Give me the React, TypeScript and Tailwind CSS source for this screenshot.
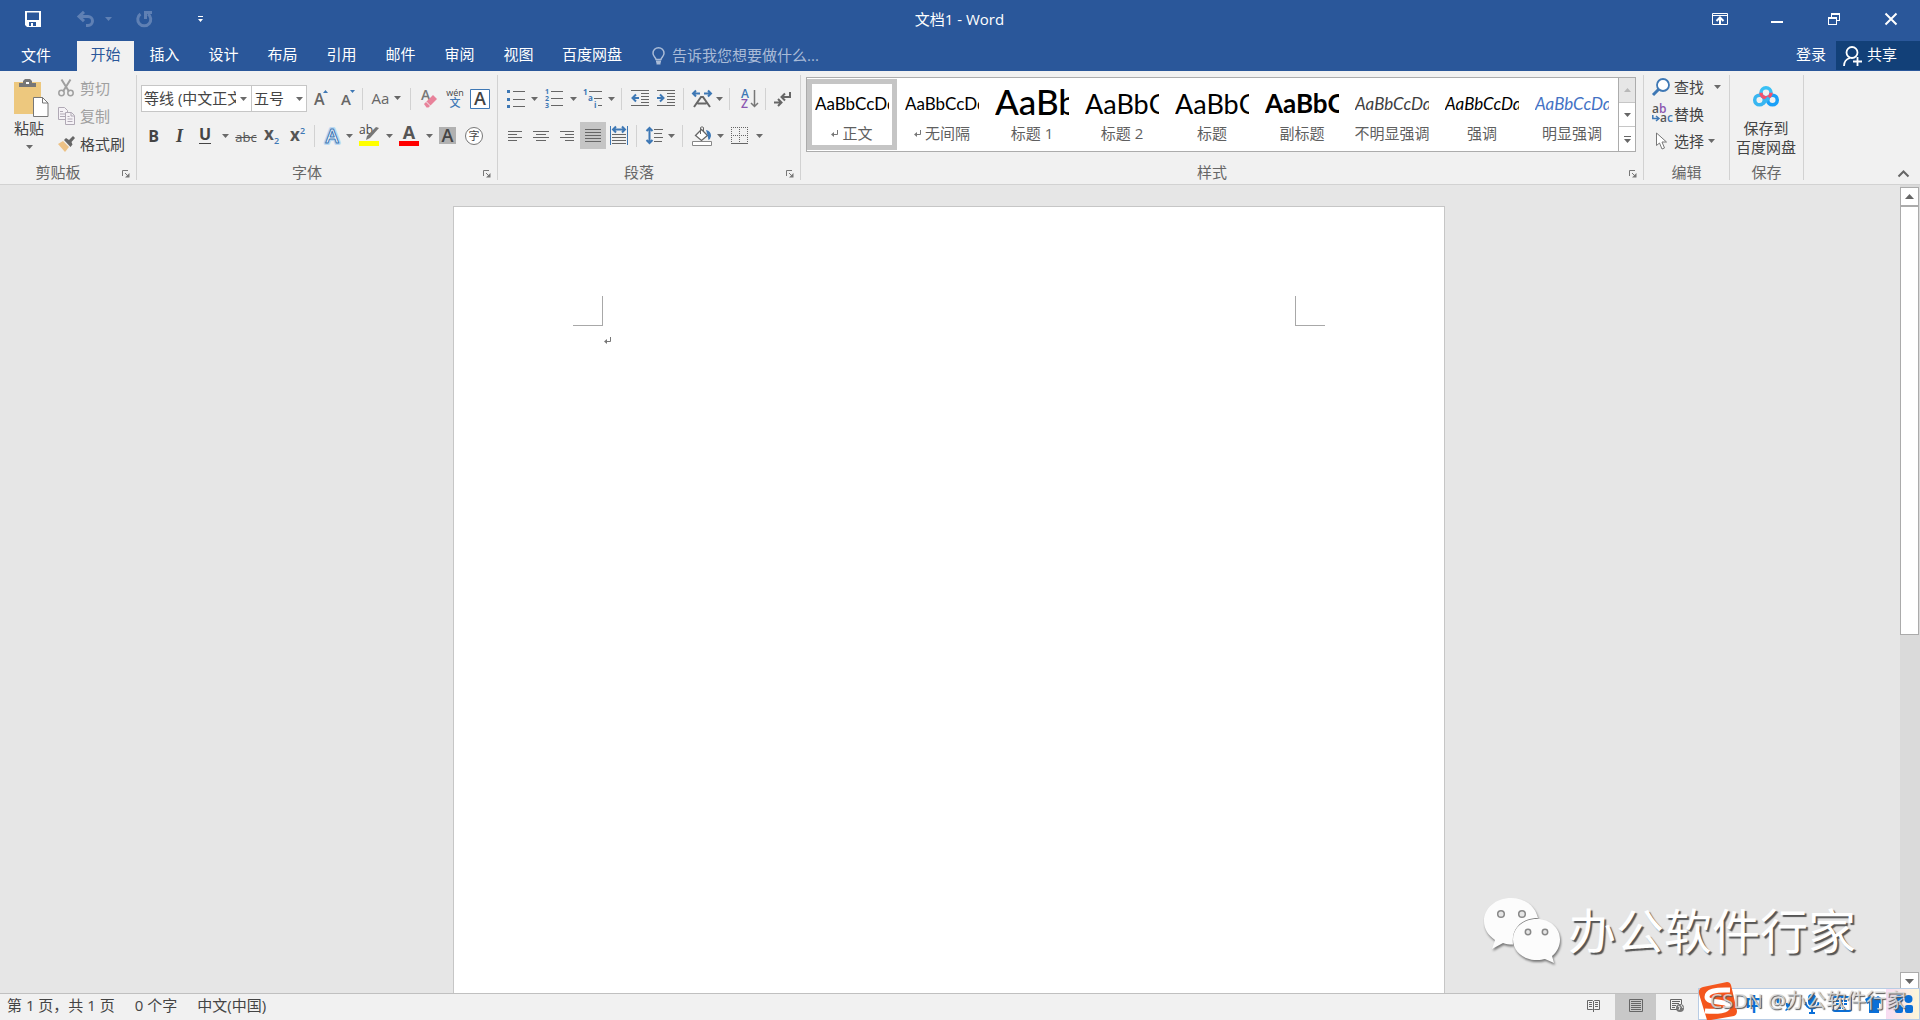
import type { ReactNode } from 'react';
import { clsx } from 'clsx';

const tabs = ['插入', '设计', '布局', '引用', '邮件', '审阅', '视图', '百度网盘'];

const styleItems = [
  { label: '正文', mark: true, selected: true, sample: 'AaBbCcDd', cls: 'text-[17px] text-black' },
  { label: '无间隔', mark: true, sample: 'AaBbCcDd', cls: 'text-[17px] text-black' },
  { label: '标题 1', sample: 'AaBb', cls: 'pb-1 text-[35px] font-medium text-black' },
  { label: '标题 2', sample: 'AaBbC', cls: 'text-[27px] text-black' },
  { label: '标题', sample: 'AaBbC', cls: 'text-[27px] text-black' },
  { label: '副标题', sample: 'AaBbC', cls: 'text-[26px] font-bold text-black' },
  { label: '不明显强调', sample: 'AaBbCcDd', cls: 'text-[17px] italic text-[#404040]' },
  { label: '强调', sample: 'AaBbCcDd', cls: 'text-[17px] italic text-black' },
  { label: '明显强调', sample: 'AaBbCcDd', cls: 'text-[17px] italic text-[#4472c4]' },
];

function Arrow({ className }: { className?: string }) {
  return (
    <svg width="7" height="4" viewBox="0 0 7 4" className={clsx('shrink-0', className)} fill="currentColor">
      <path d="M0 0h7L3.5 4z" />
    </svg>
  );
}

function Tool({ label, w, children, active }: { label: string; w: string; children: ReactNode; active?: boolean }) {
  return (
    <button
      aria-label={label}
      className={clsx('flex h-full shrink-0 items-center justify-center', w, active && 'bg-[#c5c5c5]')}
    >
      {children}
    </button>
  );
}

function Drop({ label, w = 'w-2' }: { label: string; w?: string }) {
  return (
    <Tool label={label} w={w}>
      <Arrow className="text-[#6a6a6a]" />
    </Tool>
  );
}

function Sep({ m }: { m: string }) {
  return <div className={clsx('h-[22px] w-px shrink-0 bg-[#d2d2d2]', m)} />;
}

function ToolRow({ children }: { children: ReactNode }) {
  return <div className="flex h-[27px] items-center">{children}</div>;
}

function Group({ title, launcher, className, children }: { title: string; launcher?: boolean; className: string; children: ReactNode }) {
  return (
    <>
      <section className={clsx('flex flex-col', className)}>
        <div className="min-h-0 flex-1">{children}</div>
        <div className="flex h-[22px] items-center">
          <div className="flex-1 pb-[2px] text-center text-[#666]">{title}</div>
          {launcher && (
            <button aria-label={`${title}设置`} className="flex w-5 justify-center pt-[2px]">
              <svg width="8" height="8" viewBox="0 0 8 8" fill="none" stroke="#777">
                <path d="M.5 6V.5H6M3 3l3 3" />
                <path d="M7.5 3v4.5H3z" fill="#777" stroke="none" />
              </svg>
            </button>
          )}
        </div>
      </section>
      <div className="my-1 w-px shrink-0 bg-[#d2d2d2]" />
    </>
  );
}

function Lines({ rows, w = 16 }: { rows: [number, number][]; w?: number }) {
  return (
    <svg width={w} height={rows.length * 3} viewBox={`0 0 ${w} ${rows.length * 3}`} stroke="#666">
      {rows.map(([x1, x2], i) => (
        <path key={i} d={`M${x1} ${i * 3 + 1.5}H${x2}`} />
      ))}
    </svg>
  );
}

function ReturnMark({ color = '#777' }: { color?: string }) {
  return (
    <svg width="7" height="7" viewBox="0 0 7 7" className="shrink-0" fill="none" stroke={color}>
      <path d="M6.500 0v4.500H1" />
      <path d="M0 4.500L3 2v5z" fill={color} stroke="none" />
    </svg>
  );
}

function TitleBar() {
  return (
    <div className="grid h-[38px] grid-cols-[1fr_auto_1fr] items-center pr-px text-white">
      <div className="flex items-center pl-[25px]">
        <button aria-label="保存">
          <svg width="16" height="16" viewBox="0 0 16 16" fill="#fff">
            <path fillRule="evenodd" d="M0 0h16v16H2l-2-2zM2 1.500v7.500h12V1.500zM4 11v4h2v-3h2v3h3v-4z" />
          </svg>
        </button>
        <button aria-label="撤消" className="ml-9 text-[#5f80b4]">
          <svg width="18" height="16" viewBox="0 0 18 16" fill="none" stroke="currentColor" strokeWidth="3">
            <path d="M2 5.500h9a4.500 4.500 0 0 1 0 9H9" />
            <path d="M7 .8L2 5.500l5 4.700" />
          </svg>
        </button>
        <button aria-label="撤消选项" className="ml-[10px] text-[#5f80b4]">
          <Arrow />
        </button>
        <button aria-label="重复" className="ml-6 text-[#5f80b4]">
          <svg width="16" height="16" viewBox="0 0 16 16" fill="none" stroke="currentColor" strokeWidth="3">
            <path d="M4.500 3A6.500 6.500 0 1 0 12 3" />
            <path d="M9.500 8V1.500H16" />
          </svg>
        </button>
        <button aria-label="自定义快速访问工具栏" className="ml-[46px]">
          <svg width="5" height="7" viewBox="0 0 5 7" fill="#fff">
            <path d="M0 0h5v1H0zM0 3h5L2.500 6z" />
          </svg>
        </button>
      </div>
      <h1 className="text-[15px]">文档1 - Word</h1>
      <div className="flex h-full justify-end">
        <button aria-label="功能区显示选项" className="flex w-[57px] items-center justify-center">
          <svg width="16" height="12" viewBox="0 0 16 12" fill="none" stroke="#fff">
            <path d="M.5.5h15v11H.5zM1 2.500h14" />
            <path d="M8 11V5M4.500 8L8 4.500 11.500 8" strokeWidth="2" />
          </svg>
        </button>
        <button aria-label="最小化" className="flex w-[57px] items-center justify-center pt-[6px]">
          <svg width="12" height="2" fill="#fff"><path d="M0 0h12v2H0z" /></svg>
        </button>
        <button aria-label="向下还原" className="flex w-[57px] items-center justify-center">
          <svg width="12" height="12" viewBox="0 0 12 12" fill="#fff">
            <path fillRule="evenodd" d="M3 0h9v8H9v4H0V4h3zM4 2v2h5v3h2V2zM1 6v5h7V6z" />
          </svg>
        </button>
        <button aria-label="关闭" className="flex w-[57px] items-center justify-center">
          <svg width="12" height="12" viewBox="0 0 12 12" stroke="#fff" strokeWidth="2">
            <path d="M.5.5l11 11M11.500.5l-11 11" />
          </svg>
        </button>
      </div>
    </div>
  );
}

function TabBar() {
  return (
    <div className="flex h-[33px] items-end text-white">
      <nav className="flex h-[30px] gap-[2px] whitespace-nowrap">
        <button className="mr-[3px] w-[72px] pb-[2px]">文件</button>
        <button className="w-[57px] bg-[#f1f1f1] pb-1 text-[#2a579a]">开始</button>
        {tabs.map((tab) => (
          <button key={tab} className="min-w-[57px] px-[13px] pb-1">{tab}</button>
        ))}
      </nav>
      <label className="ml-[17px] flex h-[30px] items-center gap-[7px] text-[#a9bbd7]">
        <svg width="13" height="18" viewBox="0 0 13 18" fill="none" stroke="currentColor" strokeWidth="1.500">
          <path d="M4 12.500c0-2-3-3-3-6.300a5.500 5.500 0 0 1 11 0c0 3.300-3 4.300-3 6.300z" />
          <path d="M4 14.500h5M4.500 16.500h4" strokeWidth="2" />
        </svg>
        <input
          aria-label="操作说明搜索"
          placeholder="告诉我您想要做什么..."
          className="w-[180px] bg-transparent pb-[2px] outline-none placeholder:text-[#a9bbd7]"
        />
      </label>
      <div className="ml-auto flex h-[30px] items-start">
        <button className="h-[29px] px-[10px] pb-[3px]">登录</button>
        <button className="flex h-[29px] w-[84px] items-center gap-[5px] bg-[#124078] pl-[7px]">
          <svg width="19" height="20" viewBox="0 0 19 20" fill="none" stroke="#fff" strokeWidth="1.800">
            <circle cx="9" cy="6.500" r="5.500" />
            <path d="M1 20c0-4 2.500-7 6-8M10 15.500h9M14.500 11v9" />
          </svg>
          <span className="pb-[3px]">共享</span>
        </button>
      </div>
    </div>
  );
}

function ClipboardGroup() {
  return (
    <Group title="剪贴板" launcher className="w-[136px] shrink-0">
      <div className="flex pt-2">
        <button className="flex w-[58px] flex-col items-center leading-[22px]">
          <svg width="35" height="38" viewBox="0 0 35 38" className="ml-1">
            <path d="M0 3h27v32H0z" fill="#edc87e" />
            <path d="M5 8V4h4V2l2-2h5l2 2v2h4v4z" fill="#777" />
            <path d="M12 3h3v2h-3z" fill="#fff" />
            <path d="M19.500 18.500h9l5.500 5.500v13.500H19.500z" fill="#fff" stroke="#777" />
            <path d="M28.500 18.500V24H34" fill="none" stroke="#777" />
          </svg>
          <span>粘贴</span>
          <Arrow className="mt-[6px] text-[#6a6a6a]" />
        </button>
        <div className="flex flex-col items-start">
          <button className="flex h-7 items-center gap-[6px] pb-[10px] text-[#a0a0a0]">
            <svg width="16" height="18" viewBox="0 0 16 18" fill="none" stroke="currentColor" strokeWidth="1.500">
              <circle cx="3.500" cy="14" r="2.700" />
              <circle cx="12.500" cy="14" r="2.700" />
              <path d="M3.500.5l7.500 12M12.500.5L5 12.500" strokeWidth="2" />
            </svg>
            剪切
          </button>
          <button className="flex h-7 items-center gap-[5px] pb-[10px] text-[#a0a0a0]">
            <svg width="17" height="18" viewBox="0 0 17 18" fill="#f5f2f6" stroke="#b0a9b5">
              <path d="M.5.5h6l3 3v9h-9zM2 4.500h3M2 7h5M2 9.500h5" />
              <path d="M7.500 5.500h6l3 3v9h-9zM13 5.500V9h3M9.500 9.500h2M9.500 12h5M9.500 14.500h5" />
            </svg>
            复制
          </button>
          <button className="flex h-7 items-center gap-[5px] pb-[10px]">
            <svg width="17" height="16" viewBox="0 0 17 16">
              <path d="M0 8l5-3 6 6-4 5z" fill="#edc286" />
              <path d="M6 4l2-2 3 2 4-4 2 2-3.500 4 1 2.500-2 2.500z" fill="#666" />
            </svg>
            格式刷
          </button>
        </div>
      </div>
    </Group>
  );
}

function FontGroup() {
  return (
    <Group title="字体" launcher className="w-[360px] shrink-0">
      <div className="flex flex-col gap-[10px] pt-[14px] pl-1">
        <ToolRow>
          <div className="flex h-full w-[110px] items-center border border-r-0 border-[#c6c6c6] bg-white pl-[2px]">
            <input aria-label="字体" defaultValue="等线 (中文正文)" className="w-[92px] shrink-0 pb-[2px] outline-none" />
            <Drop label="字体列表" w="w-[15px]" />
          </div>
          <div className="flex h-full w-[56px] items-center border border-[#c6c6c6] bg-white pl-[2px]">
            <input aria-label="字号" defaultValue="五号" className="w-[38px] shrink-0 pb-[2px] outline-none" />
            <Drop label="字号列表" w="w-[15px]" />
          </div>
          <Tool label="增大字号" w="w-7">
            <svg width="14" height="18" viewBox="0 0 14 18">
              <text x="0" y="15" fontSize="16" fontWeight="600" fill="#666">A</text>
              <path d="M9 3h5l-2.500-3z" fill="#3e78b5" />
            </svg>
          </Tool>
          <Tool label="减小字号" w="w-[26px]">
            <svg width="14" height="18" viewBox="0 0 14 18">
              <text x="0" y="15" fontSize="15" fontWeight="600" fill="#666">A</text>
              <path d="M9 0h5l-2.500 3z" fill="#3e78b5" />
            </svg>
          </Tool>
          <Sep m="mr-[5px] ml-px" />
          <Tool label="更改大小写" w="w-[37px] gap-[5px] pb-[2px] text-[#666]">
            Aa
            <Arrow />
          </Tool>
          <Sep m="mx-[5px]" />
          <Tool label="清除所有格式" w="w-[26px]">
            <svg width="17" height="19" viewBox="0 0 17 19">
              <text x="0" y="11" fontSize="14" fontWeight="600" fill="#777">A</text>
              <path d="M3 15L12 6l4 4-8.500 8.500H5.500z" fill="#e8829a" />
              <path d="M5 12.500l4.500 4.500" stroke="#f1f1f1" />
            </svg>
          </Tool>
          <Tool label="拼音指南" w="w-[25px]">
            <svg width="18" height="20" viewBox="0 0 18 20">
              <text x="9" y="7" fontSize="9" textAnchor="middle" fill="#444">wén</text>
              <text x="9" y="18" fontSize="11" fontWeight="500" textAnchor="middle" fill="#3e78b5">文</text>
            </svg>
          </Tool>
          <Tool label="字符边框" w="w-[26px]">
            <svg width="20" height="20" viewBox="0 0 20 20">
              <path d="M.5.5h19v19H.5z" fill="#fff" stroke="#3e78b5" />
              <text x="10" y="16" fontSize="18" fontWeight="600" textAnchor="middle" fill="#444">A</text>
            </svg>
          </Tool>
        </ToolRow>
        <ToolRow>
          <Tool label="加粗" w="w-[25px] text-base font-bold">B</Tool>
          <Tool label="倾斜" w="w-[27px]">
            <span className="font-['Liberation_Serif',serif] text-lg font-bold italic">I</span>
          </Tool>
          <Tool label="下划线" w="w-6">
            <span className="h-[17px] border-b border-[#444] text-base leading-[14px] font-bold">U</span>
          </Tool>
          <Drop label="下划线样式" w="w-4" />
          <Tool label="删除线" w="w-[26px] pt-[2px] text-[13px] text-[#555] line-through">abc</Tool>
          <Tool label="下标" w="w-[25px]">
            <svg width="16" height="18" viewBox="0 0 16 18">
              <text x="0" y="13" fontSize="17" fontWeight="700" fill="#555">x</text>
              <text x="10" y="17" fontSize="9" fontWeight="600" fill="#3e78b5">2</text>
            </svg>
          </Tool>
          <Tool label="上标" w="w-[27px]">
            <svg width="16" height="18" viewBox="0 0 16 18">
              <text x="0" y="14" fontSize="17" fontWeight="700" fill="#555">x</text>
              <text x="10" y="7" fontSize="9" fontWeight="600" fill="#3e78b5">2</text>
            </svg>
          </Tool>
          <Sep m="mx-[3px]" />
          <Tool label="文本效果" w="w-[27px]">
            <svg width="18" height="20" viewBox="0 0 18 20">
              <g fontSize="20" fontWeight="600" textAnchor="middle" strokeLinejoin="round">
                <text x="9" y="17" fill="none" stroke="#bcd9f2" strokeWidth="4">A</text>
                <text x="9" y="17" fill="#fff" stroke="#3e78b5">A</text>
              </g>
            </svg>
          </Tool>
          <Drop label="文本效果选项" />
          <Tool label="突出显示" w="w-8">
            <svg width="20" height="20" viewBox="0 0 20 20">
              <text x="0" y="8" fontSize="12" fill="#444">ab</text>
              <path d="M17 1l3 1-9 10-4 2 1-4z" fill="#777" />
              <path d="M0 15h20v5H0z" fill="#ff0" />
            </svg>
          </Tool>
          <Drop label="突出显示颜色" />
          <Tool label="字体颜色" w="w-8">
            <svg width="20" height="20" viewBox="0 0 20 20">
              <text x="10" y="13" fontSize="18" fontWeight="700" textAnchor="middle" fill="#555">A</text>
              <path d="M0 15h20v5H0z" fill="#f00" />
            </svg>
          </Tool>
          <Drop label="字体颜色选项" />
          <Tool label="字符底纹" w="w-7">
            <svg width="17" height="17" viewBox="0 0 17 17">
              <path d="M0 0h17v17H0z" fill="#b1b1b1" />
              <text x="8.500" y="15" fontSize="18" fontWeight="600" textAnchor="middle" fill="#444">A</text>
            </svg>
          </Tool>
          <Tool label="带圈字符" w="w-[26px]">
            <svg width="18" height="18" viewBox="0 0 18 18">
              <circle cx="9" cy="9" r="8.500" fill="#fff" stroke="#777" />
              <text x="9" y="13" fontSize="11" textAnchor="middle" fill="#444">字</text>
            </svg>
          </Tool>
        </ToolRow>
      </div>
    </Group>
  );
}

function ParagraphGroup() {
  return (
    <Group title="段落" launcher className="w-[302px] shrink-0">
      <div className="flex flex-col gap-[10px] pt-[14px] pl-1">
        <ToolRow>
          <Tool label="项目符号" w="w-[27px]">
            <svg width="18" height="18" viewBox="0 0 18 18" stroke="#666">
              <path d="M6 1.500h12M6 9.500h12M6 16.500h12" />
              <path d="M0 1.500h3M0 9.500h3M0 16.500h3" stroke="#3e78b5" strokeWidth="3" />
            </svg>
          </Tool>
          <Drop label="项目符号库" w="w-[10px]" />
          <Tool label="编号" w="w-[29px]">
            <svg width="18" height="19" viewBox="0 0 18 19">
              <path d="M6 2.500h12M6 9.500h12M6 16.500h12" stroke="#666" />
              <g fontSize="7" fontWeight="700" fill="#3e78b5">
                <text x="0" y="5">1</text>
                <text x="0" y="12">2</text>
                <text x="0" y="19">3</text>
              </g>
            </svg>
          </Tool>
          <Drop label="编号库" w="w-[10px]" />
          <Tool label="多级列表" w="w-7">
            <svg width="19" height="19" viewBox="0 0 19 19">
              <path d="M6 2.500h13M11 9.500h8M15 16.500h4" stroke="#666" />
              <g fontSize="8" fontWeight="700" fill="#3e78b5">
                <text x="0" y="6">1</text>
                <text x="5" y="12">a</text>
                <text x="11" y="19">i</text>
              </g>
            </svg>
          </Tool>
          <Drop label="多级列表库" w="w-[10px]" />
          <Sep m="mx-[5px]" />
          <Tool label="减少缩进量" w="w-[26px]">
            <svg width="18" height="17" viewBox="0 0 18 17" fill="none" stroke="#666">
              <path d="M0 .5h18M10 3.500h8M10 6.500h8M10 9.500h8M10 12.500h8M0 15.500h18" />
              <path d="M8 8H1.500M5 4.500L1.500 8 5 11.500" stroke="#3e78b5" strokeWidth="2" />
            </svg>
          </Tool>
          <Tool label="增加缩进量" w="w-[26px]">
            <svg width="18" height="17" viewBox="0 0 18 17" fill="none" stroke="#666">
              <path d="M0 .5h18M10 3.500h8M10 6.500h8M10 9.500h8M10 12.500h8M0 15.500h18" />
              <path d="M0 8h6.500M3 4.500L6.500 8 3 11.500" stroke="#3e78b5" strokeWidth="2" />
            </svg>
          </Tool>
          <Sep m="mx-1" />
          <Tool label="中文版式" w="w-[27px]">
            <svg width="20" height="18" viewBox="0 0 20 18" fill="none">
              <path d="M8 3.500H1.500M4 .5l-3 3 3 3M12 3.500h6.500M16 .5l3 3-3 3" stroke="#3e78b5" strokeWidth="2" />
              <path d="M2 17l7-10h2l7 10M5.500 13.500h9" stroke="#666" strokeWidth="2" />
            </svg>
          </Tool>
          <Drop label="中文版式选项" />
          <Sep m="mx-[6px]" />
          <Tool label="排序" w="w-[26px]">
            <svg width="17" height="20" viewBox="0 0 17 20">
              <text x="0" y="9" fontSize="12" fontWeight="600" fill="#3e78b5">A</text>
              <text x="0" y="19" fontSize="12" fontWeight="600" fill="#8b57b0">Z</text>
              <path d="M13.500 1v16M10 14l3.500 3.500L17 14" fill="none" stroke="#777" strokeWidth="1.500" />
            </svg>
          </Tool>
          <Sep m="mx-[3px]" />
          <Tool label="显示/隐藏编辑标记" w="w-[26px]">
            <svg width="17" height="14" viewBox="0 0 17 14" fill="none" stroke="#666" strokeWidth="2">
              <path d="M16 0v5H8M11 1.500L7.500 5 11 8.500M0 10.500h7M4 7l3.500 3.500L4 14" />
            </svg>
          </Tool>
        </ToolRow>
        <ToolRow>
          <Tool label="左对齐" w="w-[26px]">
            <Lines w={14} rows={[[0, 14], [0, 9], [0, 14], [0, 9]]} />
          </Tool>
          <Tool label="居中" w="w-[26px]">
            <Lines rows={[[0, 16], [3, 13], [0, 16], [3, 13]]} />
          </Tool>
          <Tool label="右对齐" w="w-[26px]">
            <Lines w={14} rows={[[0, 14], [5, 14], [0, 14], [5, 14]]} />
          </Tool>
          <Tool label="两端对齐" w="w-[26px]" active>
            <Lines rows={[[0, 16], [0, 16], [0, 16], [0, 16], [0, 16]]} />
          </Tool>
          <Tool label="分散对齐" w="w-[26px]">
            <svg width="18" height="19" viewBox="0 0 18 19" fill="none" stroke="#666">
              <path d="M2 8.500h14M2 11.500h14M2 14.500h14M2 17.500h14" />
              <path d="M.5 0v19M17.500 0v19" stroke="#3e78b5" />
              <path d="M3.500 3.500h11M6 .5l-3 3 3 3M12 .5l3 3-3 3" stroke="#3e78b5" strokeWidth="2" />
            </svg>
          </Tool>
          <Sep m="mx-1" />
          <Tool label="行和段落间距" w="w-[26px]">
            <svg width="17" height="19" viewBox="0 0 17 19" fill="none" stroke="#666">
              <path d="M8 3.500h9M8 7.500h8M8 11.500h9M8 15.500h8" />
              <path d="M3.500 1.500v16M.5 5l3-3 3 3M.5 14l3 3 3-3" stroke="#3e78b5" strokeWidth="2" />
            </svg>
          </Tool>
          <Drop label="行距选项" />
          <Sep m="mx-[7px]" />
          <Tool label="底纹" w="w-6">
            <svg width="20" height="20" viewBox="0 0 20 20" fill="none" stroke="#666">
              <path d="M9.500 3.500l6 6-6 5-6-5z" fill="#fff" strokeWidth="1.300" />
              <path d="M8.500 8V1.500Q10 0 11.500 1.500V6" />
              <path d="M14 4q5 1 5 6-.5 3-2.500 4l-1-5z" fill="#3e78b5" stroke="none" />
              <path d="M.5 15.500h19v4H.5z" fill="#fff" stroke="#888" />
            </svg>
          </Tool>
          <Drop label="底纹颜色" w="w-3" />
          <Tool label="边框" w="w-[26px]">
            <svg width="17" height="17" viewBox="0 0 17 17" stroke="#666">
              <path d="M0 .5h17M.5 0v17M16.500 0v17M8.500 0v17M0 8.500h17" strokeDasharray="1 1" />
              <path d="M0 16.500h17" />
            </svg>
          </Tool>
          <Drop label="边框选项" w="w-[14px]" />
        </ToolRow>
      </div>
    </Group>
  );
}

function StylesGroup() {
  return (
    <Group title="样式" launcher className="w-[842px] min-w-0">
      <div className="flex pt-[6px] pr-[7px] pl-[5px]">
        <div className="flex h-[75px] min-w-0 flex-1 overflow-hidden border border-[#acacac] bg-white py-px">
          {styleItems.map((item) => (
            <button
              key={item.label}
              className={clsx(
                'flex w-[90px] shrink-0 flex-col border-[5px] px-[3px]',
                item.selected ? 'border-[#c5c5c5]' : 'border-transparent',
              )}
            >
              <span
                className={clsx(
                  "flex h-[39px] w-[74px] items-center overflow-hidden font-['Lato',sans-serif] leading-[39px] whitespace-nowrap",
                  item.cls,
                )}
              >
                {item.sample}
              </span>
              <span className="-mx-1 flex h-5 items-center justify-center gap-1 self-stretch leading-5 whitespace-nowrap text-[#5f5f5f]">
                {item.mark && <ReturnMark />}
                {item.label}
              </span>
            </button>
          ))}
        </div>
        <div className="flex h-[75px] w-[17px] shrink-0 flex-col border border-l-0 border-[#acacac] bg-white">
          <button aria-label="上一行" className="flex flex-1 items-center justify-center bg-[#e6e6e6] text-[#b8b8b8]">
            <Arrow className="rotate-180" />
          </button>
          <button aria-label="下一行" className="flex flex-1 items-center justify-center border-y border-[#c6c6c6] text-[#666]">
            <Arrow />
          </button>
          <button aria-label="其他样式" className="flex flex-1 items-center justify-center">
            <svg width="7" height="7" viewBox="0 0 7 7" fill="#666">
              <path d="M0 0h7v1H0zM0 3h7L3.500 7z" />
            </svg>
          </button>
        </div>
      </div>
    </Group>
  );
}

function EditGroup() {
  return (
    <Group title="编辑" className="w-[85px] shrink-0">
      <div className="flex flex-col pt-[2px] pl-2">
        <button className="flex h-[27px] items-center">
          <svg width="18" height="18" viewBox="0 0 18 18" className="mr-1" fill="#fff" stroke="#3e78b5">
            <path d="M1 17l6-6" strokeWidth="3" />
            <circle cx="11" cy="7" r="6" strokeWidth="1.800" />
          </svg>
          查找
          <Arrow className="ml-[10px] text-[#6a6a6a]" />
        </button>
        <button className="flex h-[27px] items-center">
          <svg width="20" height="18" viewBox="0 0 20 18" className="mr-[2px]" fontSize="12" fontWeight="600">
            <text x="0" y="8" fill="#555">a<tspan fill="#8b57b0">b</tspan></text>
            <text x="8" y="17" fill="#555">a<tspan fill="#3e78b5">c</tspan></text>
            <path d="M.8 10v3.500H6M4 11l3 2.500L4 16" fill="none" stroke="#3e78b5" strokeWidth="1.500" />
          </svg>
          替换
        </button>
        <button className="flex h-[27px] items-center">
          <svg width="12" height="18" viewBox="0 0 12 18" className="mr-[6px] ml-1" fill="#fff" stroke="#777">
            <path d="M.5 1v12.500l3-2.500 2.500 6 2.500-1L6 10h4.500z" />
          </svg>
          选择
          <Arrow className="ml-1 text-[#6a6a6a]" />
        </button>
      </div>
    </Group>
  );
}

function Ribbon() {
  return (
    <div className="flex h-[114px] border-b border-[#d2d2d2] bg-[#f1f1f1] whitespace-nowrap">
      <ClipboardGroup />
      <FontGroup />
      <ParagraphGroup />
      <StylesGroup />
      <EditGroup />
      <Group title="保存" className="w-[73px] shrink-0">
        <button className="flex w-full flex-col items-center pt-[15px] pr-px leading-[19px]">
          <svg width="26" height="21" viewBox="0 0 26 21" fill="none" strokeWidth="3.500">
            <circle cx="6.500" cy="14" r="4.800" stroke="#38b6f1" />
            <circle cx="19.500" cy="14" r="4.800" stroke="#1aa0f8" />
            <circle cx="13" cy="6.800" r="5" stroke="#38c0f5" />
            <path d="M8 6.800a5 5 0 0 0 10 0" stroke="#f4516c" />
            <path d="M10 17.500l6-6" stroke="#38b6f1" />
          </svg>
          <span className="mt-3">保存到</span>
          <span>百度网盘</span>
        </button>
      </Group>
      <div className="flex flex-1 items-end justify-end pr-[11px] pb-[7px]">
        <button aria-label="折叠功能区">
          <svg width="11" height="7" viewBox="0 0 11 7" fill="none" stroke="#666" strokeWidth="2">
            <path d="M.5 6.500l5-5 5 5" />
          </svg>
        </button>
      </div>
    </div>
  );
}

function Watermark() {
  return (
    <div className="absolute right-[64px] bottom-7 flex items-center gap-2 text-white">
      <svg width="76" height="68" viewBox="0 0 76 68" className="drop-shadow-[1px_2px_1px_#777]" fill="#fcfcfc">
        <path d="M27 1C12 1 0 11 0 24c0 8 4 14 11 19L8 52l11-6c3 1 6 1.500 10 1.500C27 31 38 21 54 21 51 8 40 1 27 1z" />
        <path d="M53 22c-14 0-24 9-24 20.500S39 63 53 63c3 0 6-.5 8-1l9 4-2-7c5-4 8-10 8-16.500C76 31 66 22 53 22z" />
        <g fill="#e6e6e6" stroke="#888" strokeWidth="1.500">
          <circle cx="17" cy="17" r="3.300" />
          <circle cx="38" cy="17" r="3.300" />
          <circle cx="44" cy="35" r="2.700" />
          <circle cx="61" cy="35" r="2.700" />
        </g>
      </svg>
      <span className="text-5xl leading-[60px] text-shadow-[2px_2px_1px_#555]">办公软件行家</span>
    </div>
  );
}

function Canvas() {
  return (
    <main className="relative flex min-h-0 flex-1 bg-[#e6e6e6]">
      <div className="flex min-w-0 flex-1 justify-center overflow-hidden pt-[21px] pr-[2px]">
        <article className="flex w-[992px] items-start justify-between border border-b-0 border-[#c6c6c6] bg-white px-[119px] pt-[89px]">
          <div>
            <div className="size-[30px] border-r border-b border-[#a8a8a8]" />
            <p className="mt-[11px] ml-[31px]">
              <ReturnMark />
            </p>
          </div>
          <div className="size-[30px] border-b border-l border-[#a8a8a8]" />
        </article>
      </div>
      <div className="flex w-5 flex-col bg-[#dadada] pt-[2px] pr-px text-[#666]">
        <button aria-label="向上滚动" className="flex h-[19px] shrink-0 items-center justify-center border border-[#ababab] bg-white">
          <svg width="9" height="5" fill="currentColor"><path d="M0 5h9L4.500 0z" /></svg>
        </button>
        <div className="min-h-0 flex-1">
          <div className="h-[56%] border border-[#ababab] bg-white" />
        </div>
        <button aria-label="向下滚动" className="mb-[3px] flex h-[18px] shrink-0 items-center justify-center border border-[#ababab] bg-white">
          <svg width="9" height="5" fill="currentColor"><path d="M0 0h9L4.500 5z" /></svg>
        </button>
      </div>
      <Watermark />
    </main>
  );
}

function InputMethodBar() {
  return (
    <div className="absolute right-0 bottom-0 flex h-[38px] w-[222px] items-end">
      <div className="flex h-[32px] flex-1 items-center justify-between border border-[#b8cce4] bg-linear-to-r from-white from-85% via-[#f7dcf3] to-[#fdf6d8] pr-[6px] pl-[46px] text-[#0a6fd8]">
        <span className="text-lg leading-6 font-bold">中</span>
        <svg width="16" height="14" viewBox="0 0 16 14" fill="currentColor">
          <circle cx="4" cy="4" r="2.500" />
          <path d="M11 6h4q1 5-4 8l-1-1q3-2 1-4z" />
        </svg>
        <svg width="16" height="20" viewBox="0 0 16 20" fill="none" stroke="currentColor" strokeWidth="2">
          <rect x="5" y="1" width="6" height="10" rx="3" fill="currentColor" />
          <path d="M1.500 8a6.500 6.500 0 0 0 13 0M8 14v5M5 19h6" />
        </svg>
        <svg width="20" height="16" viewBox="0 0 20 16" fill="none" stroke="currentColor" strokeWidth="2">
          <rect x="1" y="1" width="18" height="14" rx="2" />
          <path d="M4 5h12M4 8h12M6 12h8" strokeDasharray="3 1" />
        </svg>
        <svg width="18" height="17" viewBox="0 0 18 17" fill="currentColor">
          <path d="M5 0q4 3 8 0l5 3-2 5-2-1v10H4V7L2 8 0 3z" />
        </svg>
        <svg width="18" height="18" viewBox="0 0 18 18" fill="currentColor">
          <circle cx="4" cy="4" r="4" />
          <circle cx="13.500" cy="4" r="4" />
          <rect y="10" width="8" height="8" rx="2" />
          <rect x="10" y="10" width="8" height="8" rx="2" />
        </svg>
      </div>
      <svg width="40" height="38" viewBox="0 0 40 38" className="absolute bottom-0 left-0">
        <path d="M5 5L29 0q3 0 4 3l6 26q0 4-3 5l-23 4H9L1 12Q0 6 5 5z" fill="#f4561d" />
        <path d="M32 8Q9 7 9 15c0 7 21 3 21 9 0 5-10 6-23 5" fill="none" stroke="#fff" strokeWidth="5" />
      </svg>
      <span className="absolute right-[14px] bottom-[5px] text-xl leading-7 whitespace-nowrap text-[#ddd]/85 text-shadow-[1px_1px_1px_#555]">
        CSDN @办公软件行家
      </span>
    </div>
  );
}

function StatusBar() {
  return (
    <footer className="relative flex h-[27px] items-center border-t border-[#c0c0c0] bg-[#f1f1f1] pl-[7px]">
      <div className="flex gap-5 pb-1 whitespace-nowrap">
        <span>第 1 页，共 1 页</span>
        <span>0 个字</span>
        <span>中文(中国)</span>
      </div>
      <div className="mr-[223px] ml-auto flex h-full">
        <button aria-label="阅读视图" className="flex w-[43px] items-center justify-center pb-1">
          <svg width="13" height="13" viewBox="0 0 13 13" fill="none" stroke="#666">
            <path d="M.5 1.500h5l1 1 1-1h5v9h-5l-1 1-1-1h-5zM6.500 2v11M2 3.500h3M2 5.500h3M2 7.500h3M8 3.500h3M8 5.500h3M8 7.500h3" />
          </svg>
        </button>
        <button aria-label="页面视图" className="flex w-[41px] items-center justify-center bg-[#c8c8c8] pb-1">
          <svg width="14" height="13" viewBox="0 0 14 13" fill="none" stroke="#666">
            <path d="M.5.5h13v12H.5zM2 2.500h10M2 4.500h10M2 6.500h10M2 8.500h10M2 10.500h10" />
          </svg>
        </button>
        <button aria-label="Web 版式视图" className="flex w-[41px] items-center justify-center pb-1">
          <svg width="14" height="13" viewBox="0 0 14 13" fill="none" stroke="#666">
            <path d="M7 10.500H.5V.5h11V5M2 2.500h8M2 4.500h7M2 6.500h4M2 8.500h3" />
            <circle cx="10" cy="9" r="4" fill="#777" stroke="none" />
            <path d="M8 7l2 1-1 3M11 6l2 3" stroke="#eee" />
          </svg>
        </button>
      </div>
      <InputMethodBar />
    </footer>
  );
}

export default function App() {
  return (
    <div className="flex h-screen flex-col overflow-hidden bg-[#f1f1f1] font-['Open_Sans','Noto_Sans_CJK_SC',sans-serif] text-[15px] leading-5 text-[#444] [&_svg]:overflow-visible">
      <header className="bg-[#2a579a]">
        <TitleBar />
        <TabBar />
      </header>
      <Ribbon />
      <Canvas />
      <StatusBar />
    </div>
  );
}
